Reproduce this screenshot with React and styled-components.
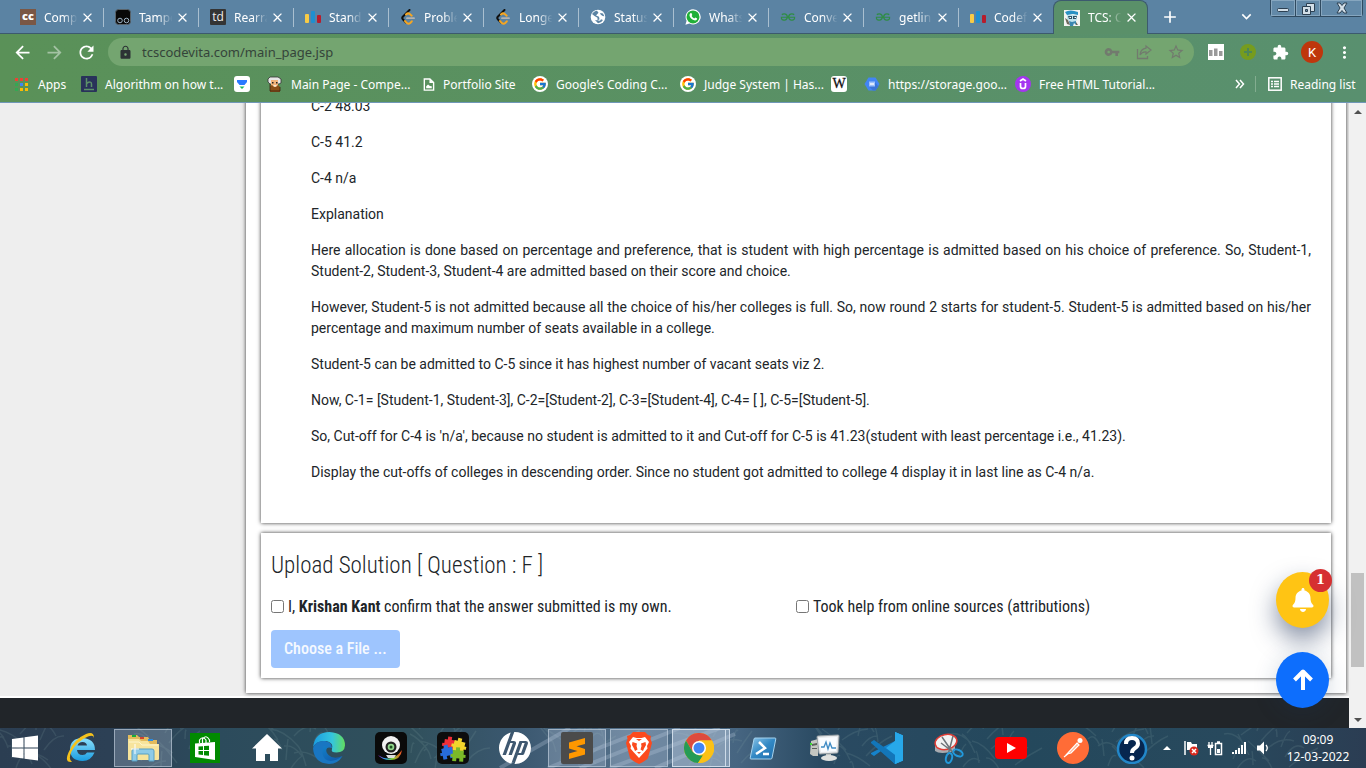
import React from 'react';
import styled, { createGlobalStyle, css } from 'styled-components';
import { MdArrowBack, MdArrowForward, MdRefresh, MdLock, MdVpnKey, MdStarBorder, MdExtension, MdMoreVert, MdClose, MdAdd, MdKeyboardArrowDown } from 'react-icons/md';
import { FaBell } from 'react-icons/fa';
import { FcGoogle } from 'react-icons/fc';
import { SiHp, SiGeeksforgeeks } from 'react-icons/si';

const uiFont = '"Noto Sans", "Open Sans", sans-serif';
const condensed = '"Roboto Condensed", "Liberation Sans Narrow", Roboto, sans-serif';

const GlobalStyle = createGlobalStyle`
  *, *::before, *::after { box-sizing: border-box; }
  body { margin: 0; overflow: hidden; }
  button, input { font: inherit; }
  button { border: 0; padding: 0; background: none; color: inherit; }
  svg { display: block; flex: none; }
`;

const Screen = styled.div`
  display: flex;
  flex-direction: column;
  height: 100vh;
  background: #fff;
  font-family: ${uiFont};
`;

/* ---------- browser: tab strip ---------- */

const TabStrip = styled.header`
  display: flex;
  flex: none;
  height: 34px;
  padding-left: 8px;
  background: #5b83a3;
  border-bottom: 1px solid #3c5a6e;
`;

const Tabs = styled.div`
  display: flex;
`;

const Tab = styled.div`
  display: flex;
  align-items: center;
  width: 95px;
  height: 34px;
  padding: 0 8px 0 12px;
  color: #fff;
  font-size: 12px;
  position: relative;
  &::after {
    content: '';
    position: absolute;
    right: -1px;
    top: 8px;
    height: 19px;
    width: 1px;
    background: ${(p) => (p.$divider ? '#a9bfd0' : 'transparent')};
  }
  ${(p) =>
    p.$active &&
    css`
      border: 1px solid #3c5a6e;
      border-bottom: 0;
      border-radius: 8px 8px 0 0;
      background: #5a9069;
      padding: 0 8px 0 10px;
    `}
`;

const TabTitle = styled.button`
  width: 38px;
  margin-left: 8px;
  white-space: nowrap;
  text-align: left;
  mask-image: linear-gradient(90deg, #000 50%, transparent 88%);
`;

const CloseButton = styled.button`
  display: flex;
  width: 15px;
  margin-left: -2px;
`;

const StripButton = styled.button`
  display: flex;
  align-items: center;
  justify-content: center;
  width: 44px;
  color: #fff;
`;

const Spacer = styled.div`
  flex: 1;
`;

const WindowControls = styled.div`
  display: flex;
  width: 93px;
  height: 17px;
  margin: 0 3px 0 2px;
  border: 1px solid #2f4a60;
  border-top: 0;
  border-radius: 0 0 4px 4px;
  background: #6289a8;
`;

const WindowButton = styled.button`
  display: flex;
  align-items: center;
  justify-content: center;
  flex: ${(p) => p.$grow || 1};
  border-left: ${(p) => (p.$first ? 0 : '1px solid #2f4a60')};
  box-shadow: inset 0 0 0 1px #86a6bf;
`;

/* ---------- browser: toolbar ---------- */

const Toolbar = styled.div`
  display: flex;
  align-items: center;
  flex: none;
  height: 34px;
  padding: 2px 6px 0;
  background: linear-gradient(90deg, #5a9158, #59906f);
  color: #fff;
`;

const ToolButton = styled.button`
  display: flex;
  align-items: center;
  justify-content: center;
  width: 32px;
  height: 28px;
  opacity: ${(p) => (p.disabled ? 0.45 : 1)};
  color: #fff;
`;

const AddressBar = styled.label`
  display: flex;
  align-items: center;
  flex: 1;
  height: 28px;
  margin: 0 6px;
  padding: 0 2px 0 10px;
  border-radius: 14px;
  background: #74a570;
  color: #2c3335;
  button { color: #727a6e; }
`;

const AddressInput = styled.input`
  flex: 1;
  min-width: 0;
  margin-left: 9px;
  padding: 0;
  border: 0;
  background: transparent;
  color: #34443a;
  font-family: ${uiFont};
  font-size: 13px;
`;

const Avatar = styled.span`
  display: flex;
  align-items: center;
  justify-content: center;
  width: 22px;
  height: 22px;
  border-radius: 50%;
  background: #bf360c;
  font: 13px Roboto, sans-serif;
`;

/* ---------- browser: bookmarks ---------- */

const BookmarkBar = styled.nav`
  display: flex;
  align-items: center;
  flex: none;
  gap: 17px;
  height: 35px;
  padding: 0 14px 2px 15px;
  background: linear-gradient(90deg, #5a9158, #59906f);
  border-bottom: 1px solid #6f97b8;
`;

const Bookmark = styled.a`
  display: flex;
  align-items: center;
  gap: 8px;
  color: #fff;
  font-size: 12px;
  text-decoration: none;
  white-space: nowrap;
`;

const BookmarkLabel = styled.span`
  width: ${(p) => p.$width}px;
`;

const BarDivider = styled.span`
  width: 1px;
  height: 16px;
  background: #83ad90;
  margin: 0 -5px 0 -7px;
`;

/* ---------- page ---------- */

const Viewport = styled.div`
  position: relative;
  display: flex;
  flex: 1;
  min-height: 0;
`;

const Page = styled.div`
  display: flex;
  flex-direction: column;
  justify-content: flex-end;
  flex: 1;
  overflow: hidden;
`;

const Body = styled.div`
  display: flex;
  flex: none;
  padding-bottom: 3px;
  border-bottom: 2px solid #fff;
  background: #eee;
`;

const Side = styled.aside`
  flex: none;
  width: 246px;
`;

const Main = styled.main`
  display: flex;
  flex-direction: column;
  gap: 10px;
  flex: 1;
  margin-right: 3px;
  padding: 15px;
  background: #fff;
  box-shadow: 0 0 4px #333;
`;

const Card = styled.section`
  background: #fff;
  box-shadow: 0 0 4px #333;
  color: #212529;
`;

const QuestionCard = styled(Card)`
  padding: 0 20px 25px 50px;
  font: 14px/21px Roboto, sans-serif;
  text-align: justify;
  p { margin: 0 0 15px; }
`;

const UploadCard = styled(Card)`
  padding: 19px 10px 10px;
  font: 16px/24px ${condensed};
`;

const UploadTitle = styled.h4`
  margin: 0 0 15px;
  font-size: 23px;
  line-height: 28px;
  font-weight: 300;
`;

const Confirmations = styled.div`
  display: grid;
  grid-template-columns: 1fr 1fr;
  margin-bottom: 11px;
`;

const CheckLabel = styled.label`
  display: flex;
  align-items: center;
  gap: 4px;
  input {
    width: 13px;
    height: 13px;
    margin: 0 0 2px;
  }
`;

const FileButton = styled.button`
  height: 38px;
  padding: 0 13px;
  border-radius: 4px;
  background: #9ec5fe;
  color: #f5f9ff;
  font-weight: 500;
`;

const PageFooter = styled.footer`
  flex: none;
  height: 30px;
  background: #212529;
`;

const Floating = styled.div`
  position: absolute;
  right: 37px;
  bottom: 20px;
  display: flex;
  flex-direction: column;
  gap: 24px;
`;

const RoundButton = styled.button`
  position: relative;
  display: flex;
  align-items: center;
  justify-content: center;
  width: 53px;
  height: 56px;
  border-radius: 50%;
  background: ${(p) => p.$color};
  color: #fff;
  box-shadow: ${(p) => p.$shadow};
`;

const Badge = styled.span`
  position: absolute;
  top: -3px;
  right: -3px;
  width: 23px;
  height: 23px;
  border-radius: 50%;
  background: #d63031;
  font: bold 13px/22px "DejaVu Serif", serif;
  text-align: center;
`;

const Scrollbar = styled.div`
  display: flex;
  flex-direction: column;
  flex: none;
  width: 17px;
  background: #f1f1f1;
`;

const ScrollArrow = styled.button`
  display: flex;
  align-items: center;
  justify-content: center;
  height: 17px;
`;

const ScrollSpace = styled.div`
  flex: ${(p) => p.$share};
`;

const ScrollThumb = styled.div`
  flex: 94;
  margin: 0 2px;
  background: #c1c1c1;
`;

/* ---------- taskbar ---------- */

const Taskbar = styled.footer`
  position: relative;
  display: flex;
  flex: none;
  height: 40px;
  overflow: hidden;
  background: linear-gradient(90deg, #2b3e52 0, #2c4055 8%, #2c4b5c 16%, #30505c 30%, #3b5870 38%, #54708a 46%, #466581 54%, #2a4a62 60%, #24485c 75%, #28495d 90%, #2b3d53);
`;

const Texture = styled.svg`
  position: absolute;
  inset: 0;
  width: 100%;
  height: 100%;
`;

const TaskButton = styled.button`
  position: relative;
  display: flex;
  align-items: center;
  justify-content: center;
  flex: none;
  width: ${(p) => p.$width || 58}px;
  height: 38px;
  margin: 1px 2px;
  ${(p) =>
    p.$open &&
    css`
      border: 1px solid rgba(210, 222, 235, ${p.$front ? 0.95 : 0.55});
      background: rgba(190, 205, 225, ${p.$front ? 0.5 : 0.28});
    `}
`;

const StackEdge = styled.span`
  flex: none;
  width: 4px;
  height: 38px;
  margin: 1px 2px 1px -2px;
  border: 1px solid rgba(210, 222, 235, 0.9);
  border-left: 0;
  background: rgba(190, 205, 225, 0.5);
  position: relative;
`;

const Tray = styled.div`
  position: relative;
  display: flex;
  align-items: center;
  margin-left: auto;
  color: #fff;
`;

const TrayButton = styled.button`
  display: flex;
  justify-content: center;
  width: 24px;
`;

const HelpButton = styled.button`
  margin-right: 7px;
`;

const Clock = styled.time`
  width: 82px;
  margin: 0 7px 0 2px;
  font-size: 12px;
  line-height: 17px;
  text-align: center;
  white-space: pre-line;
`;

/* ---------- icons ---------- */

const Icon = ({ size = 16, box, children, ...rest }) => (
  <svg width={size} height={size} viewBox={box || `0 0 ${size} ${size}`} aria-hidden="true" {...rest}>
    {children}
  </svg>
);

const BarsIcon = () => (
  <Icon>
    <rect x="0" y="5" width="4" height="9" rx="1" fill="#f8cb45" />
    <rect x="6" y="2" width="4" height="12" rx="1" fill="#1e8fd0" />
    <rect x="12" y="6" width="4" height="8" rx="1" fill="#b71c2c" />
  </Icon>
);

const LeetIcon = () => (
  <Icon>
    <path d="M9.5 1 3 7.5Q1.5 9 3 10.5l3 3" fill="none" stroke="#101010" strokeWidth="2" strokeLinecap="round" />
    <path d="m5 12 1.8 2q1.8 1.3 3.5 0l1.5-1.7M6 5.5q2-2 4-.3l1.7 1.5" fill="none" stroke="#f5a623" strokeWidth="2" strokeLinecap="round" />
    <path d="M7 9.2h7" stroke="#b3b3b3" strokeWidth="1.8" strokeLinecap="round" />
  </Icon>
);

const CodechefIcon = () => (
  <Icon>
    <rect width="16" height="16" fill="#7a5745" />
    <text x="8" y="11" textAnchor="middle" fontFamily="Open Sans, sans-serif" fontWeight="800" fontSize="11" fill="#fff">cc</text>
  </Icon>
);

const TamperIcon = () => (
  <Icon>
    <rect x=".5" y=".5" width="15" height="15" rx="3" fill="#080808" stroke="#59636a" />
    <circle cx="5" cy="11.5" r="2.3" fill="#111" stroke="#9fb4c6" />
    <circle cx="11.5" cy="11.5" r="2.3" fill="#111" stroke="#9fb4c6" />
  </Icon>
);

const TdIcon = () => (
  <Icon>
    <rect width="16" height="16" rx="1" fill="#343434" />
    <text x="8" y="12" textAnchor="middle" fontFamily="Open Sans, sans-serif" fontSize="12" fill="#eee">td</text>
  </Icon>
);

const GlobeIcon = () => (
  <Icon>
    <circle cx="8" cy="8" r="7.3" fill="#fff" />
    <path d="M2 5q3-3.5 5-3.3l1.5 2L6 6.5l3 1.2.5 2.5-2 1.2V8.8L4.5 7zM10 4l3 .5 1.3 2.7-1.5-.3-2-1.2zM5 11l5 .8 1-1.5 2 .8q-2 3.3-5 3.2z" fill="#5b83a3" />
  </Icon>
);

const WhatsIcon = () => (
  <Icon>
    <path d="M8 .3a7.6 7.6 0 1 1-3.5 14.3L.4 15.7l1.2-4A7.6 7.6 0 0 1 8 .3Z" fill="#fff" />
    <circle cx="8" cy="7.9" r="6.5" fill="#20b038" />
    <path d="M5.2 4.3 6.4 4l.9 2-.7 1q1 1.8 2.7 2.4l.9-1 2 1q-.2 2-2.1 2Q5 10.5 4.4 6z" fill="#fff" />
  </Icon>
);

const GfgIcon = () => (
  <Icon box="0 0 27 27">
    <g transform="translate(1 1)"><SiGeeksforgeeks size={25} color="#2f8d46" /></g>
  </Icon>
);

const TcsIcon = () => (
  <Icon>
    <rect width="16" height="16" fill="#f4f4f2" />
    <path d="M1 2q5-3 13 0v3L9 4 3 5z" fill="#2a91c4" />
    <path d="M3 5h10v5l-2 2H6L3 9z" fill="#bfe3ee" />
    <path d="M4 6h4v3H5zm5 0h4l-1 3H9z" fill="#315266" />
    <path d="M5.500 7h1.500v1H5.500zm5 0H12v1h-1.500z" fill="#fff" />
    <path d="m5 11 3 1 4-1v4l-2-2-1 3H6z" fill="#3a87b0" />
    <path d="m1 8 3 2 2 5-3-1zM12 12l2 3h-2z" fill="#6e6a5c" />
  </Icon>
);

const AppsIcon = () => (
  <Icon size={15}>
    {['#ea4335', '#ea4335', '#ea4335', '#34a853', '#4285f4', '#fbbc05', '#34a853', '#fbbc05', '#fbbc05'].map((fill, i) => (
      <rect key={i} x={(i % 3) * 5} y={1 + Math.floor(i / 3) * 5} width="3" height="3" fill={fill} />
    ))}
  </Icon>
);

const HIcon = () => (
  <Icon>
    <rect width="16" height="16" rx="1" fill="#29325a" />
    <path d="M5.500 2v9M5.500 7.500q5-3 5 .5v3M3 13.500h10" stroke="#5c9168" strokeWidth="1.500" fill="none" />
  </Icon>
);

const UnstopIcon = () => (
  <Icon>
    <rect width="16" height="16" rx="3" fill="#fff" />
    <path d="M3 4h10v2L10.500 9h-5L3 6z" fill="#2979ff" />
    <path d="M5.500 10.500h5L8 13z" fill="#1cb55c" />
  </Icon>
);

const ProfessorIcon = () => (
  <Icon>
    <path d="M3 1h8l3 2v4l-2 1H3L1 6V3z" fill="#e6e6e6" stroke="#333" strokeWidth=".8" />
    <path d="M4 4h7v7H4z" fill="#f3b37a" />
    <path d="M5 6h1.500v1.500H5zm4 0h1.500v1.500H9z" fill="#222" />
    <path d="M3 10l2-1 2 2h2l2-2 2 2v5H3z" fill="#8b4f18" />
    <path d="M6 9h4l-2 2z" fill="#f5e7d5" />
    <path d="M3 8v7h10v-4" fill="none" stroke="#3a2713" strokeWidth=".8" />
  </Icon>
);

const FileIcon = () => (
  <Icon size={13} box="0 0 13 14">
    <path d="M2 1h6l4 4v8H2z" fill="none" stroke="#fff" strokeWidth="1.500" />
    <path d="M7.500 1v4.500H12z" fill="#fff" />
    <path d="M4 11V9l2-2 2 1.500L10 9v2z" fill="#fff" />
  </Icon>
);

const GoogleIcon = () => (
  <Icon>
    <circle cx="8" cy="8" r="8" fill="#fff" />
    <g transform="translate(1 1)"><FcGoogle size={14} /></g>
  </Icon>
);

const WikiIcon = () => (
  <Icon>
    <rect width="16" height="16" rx="3" fill="#fff" />
    <text x="8" y="12" textAnchor="middle" fontFamily="Liberation Serif, serif" fontSize="14" fill="#111" stroke="#111" strokeWidth=".3">W</text>
  </Icon>
);

const CloudIcon = () => (
  <Icon>
    <path d="M4.500 1.500h7L15.500 8l-4 6.500h-7L.5 8z" fill="#4285f4" />
    <path d="m11 6 3.500 4.500-3 4H9L5 10.500z" fill="#3a74d8" />
    <path d="M5 5.500h6v5H5z" fill="#9fc1fa" />
    <path d="M6 7h4v2H6z" fill="#dfeafd" />
  </Icon>
);

const UdemyIcon = () => (
  <Icon>
    <circle cx="8" cy="8" r="8" fill="#a435f0" />
    <path d="M5.500 7v3.500q0 2 2.500 2t2.500-2V7M5 5l3-2 3 2" fill="none" stroke="#fff" strokeWidth="1.700" />
  </Icon>
);

const ReadingIcon = () => (
  <Icon size={14}>
    <rect x=".8" y=".8" width="12.400" height="12.400" fill="none" stroke="#fff" strokeWidth="1.500" />
    <path d="M3 4.500h2m1 0h5M3 7h2m1 0h5M3 9.500h2m1 0h5" stroke="#fff" strokeWidth="1.400" />
  </Icon>
);

const ShareIcon = () => (
  <Icon>
    <path d="M1.500 5v9.500h10V12" fill="none" stroke="currentColor" strokeWidth="1.300" />
    <path d="M10 2 15 6l-5 4V7.800Q6 7.500 4 11q.5-6 6-6.800z" fill="none" stroke="currentColor" strokeWidth="1.200" />
  </Icon>
);

const ChartExtIcon = () => (
  <Icon>
    <rect width="16" height="16" fill="#fff" />
    <path d="M1 6h3.500v6H1zM6 4.500h3.500V12H6zM11 7h3.500v5H11z" fill="#999" />
  </Icon>
);

const PlusExtIcon = () => (
  <Icon>
    <circle cx="8" cy="8" r="8" fill="#769c1e" />
    <path d="M8 4v8M4 8h8" stroke="#4d8756" strokeWidth="2" />
  </Icon>
);

const WindowsIcon = () => (
  <Icon size={26}>
    <path d="M0 4 11.500 2.500v10H0zM12.500 2.300 26 .5v12H12.500zM0 13.500h11.500v10L0 22zM12.500 13.500H26v12l-13.500-1.800z" fill="#fff" />
  </Icon>
);

const IeIcon = () => (
  <Icon size={32}>
    <defs>
      <linearGradient id="ie" x2="0" y2="1"><stop stopColor="#8ce0fb" /><stop offset="1" stopColor="#1a9ce0" /></linearGradient>
    </defs>
    <path d="M30 18H12q.5 5 5.500 5 3 0 4.500-2.500h7.500Q26 29 17.500 29 5 28.500 5 17.500T17 6q13 .5 13 12ZM12.500 13.500H22q-.5-3.500-4.500-3.500t-5 3.500Z" fill="url(#ie)" />
    <path d="M7 30Q-1 31 3.500 20.500 9 7 21 2q8-3 8 4-.5-3.500-6-1.500Q12 9 6.500 19.500 3 27.500 7 30Z" fill="#f5c21c" />
  </Icon>
);

const ExplorerIcon = () => (
  <Icon size={32}>
    <path d="M1 5V3h9l2 2h9l2 3h7v20H1z" fill="#e2bb5c" />
    <path d="M5 3h4v2H5z" fill="#18ad3c" /><path d="M13 5h4v2h-4z" fill="#d2452e" /><path d="M21 7h5v2h-5z" fill="#2e8ce0" />
    <path d="M1 7h11l2 2h7l2 3h9v15q0 1-1 1H2q-1 0-1-1z" fill="#f7e49c" />
    <path d="M2 10h10l3 3h16" stroke="#fdf5cc" fill="none" />
    <path d="M5 29V19q0-2 2-2h18q2 0 2 2v10h-5v-6q0-1-1-1H11q-1 0-1 1v6z" fill="#8ecbe8" stroke="#579fc4" />
    <path d="M8 12v10M4 17h8" stroke="#fff" />
  </Icon>
);

const StoreIcon = () => (
  <Icon size={30}>
    <rect width="30" height="30" fill="#018a00" />
    <path d="M5 10.500 25 9v18L5 24z" fill="#fff" />
    <path d="M9.500 10V7q3-4.500 6.500 0v3M12.500 10V6q3.500-5 7 1v2" fill="none" stroke="#fff" strokeWidth="1.200" />
    <path d="m8.500 13.500 4.500-.3V17H8.500zm5.500-.4 5-.4V17h-5zm-5.500 4.900H13v4l-4.500-.5zm5.500 0h5v4.800l-5-.6z" fill="#018a00" />
  </Icon>
);

const HomeIcon = () => (
  <Icon size={30}>
    <path d="M15 1 30 15.500h-4V28h-8v-7h-5v7H4V15.500H0z" fill="#fff" />
  </Icon>
);

const EdgeIcon = () => (
  <Icon size={32}>
    <defs>
      <linearGradient id="edgeTop"><stop stopColor="#1b9ce0" /><stop offset=".6" stopColor="#35c6dd" /><stop offset="1" stopColor="#62dd5f" /></linearGradient>
      <linearGradient id="edgeLow" x2="1" y2="1"><stop stopColor="#1280c8" /><stop offset="1" stopColor="#1254a5" /></linearGradient>
    </defs>
    <path d="M0 15Q2 0 16.500 0 32 1 32 13.500q-.5 7-8.500 7-6 0-4.500-3.500Q21 11 13.500 9 4 8 0 15Z" fill="url(#edgeTop)" />
    <path d="M0 16Q3 8 12 9q7 1 7 7-5-2-6.500 2.500Q11.500 26 21 27q4 0 8.500-3Q25 32 16 32 1 31 0 16Z" fill="#1976c2" />
    <path d="M11 14q-4 7 1 13 7 5 17.500-3-9 4-14-1-4-4-1-8z" fill="url(#edgeLow)" />
  </Icon>
);

const WebcamIcon = () => (
  <Icon size={32}>
    <defs><linearGradient id="rainbow"><stop stopColor="#9a22d0" /><stop offset=".3" stopColor="#2ba2ee" /><stop offset=".6" stopColor="#83dd35" /><stop offset="1" stopColor="#f14523" /></linearGradient></defs>
    <rect width="32" height="32" rx="5" fill="#0a0a0a" />
    <path d="M3 23q14 9 24-5-1 10-12 10-8 0-12-5Z" fill="url(#rainbow)" />
    <circle cx="16" cy="13" r="9" fill="#f2f2f2" /><circle cx="16" cy="15" r="5.500" fill="#222" /><circle cx="16" cy="15" r="3.300" fill="#91d68b" /><circle cx="16" cy="15" r="1.500" fill="#1c5122" />
    <path d="M11 23h10l-2 3h-6z" fill="#ddd" />
  </Icon>
);

const piece = 'M0 1h3V-2h4v3h4v4h2v3h-2v4H7V9H4v3H0V8h-2V5H0z';
const PuzzleIcon = () => (
  <Icon size={32}>
    <rect width="32" height="32" rx="5" fill="#0d0d0d" />
    <path d={piece} transform="translate(8 6) rotate(8)" fill="#ef2e38" />
    <path d={piece} transform="translate(18 7) rotate(14)" fill="#f2d42c" />
    <path d={piece} transform="translate(4 16) rotate(-12)" fill="#276cdc" />
    <path d={piece} transform="translate(16 17) rotate(4)" fill="#7bb928" />
  </Icon>
);

const HpIcon = () => (
  <Icon size={32}>
    <circle cx="16" cy="16" r="14" fill="#3f5870" />
    <SiHp size={32} color="#fff" />
  </Icon>
);

const SublimeIcon = () => (
  <Icon size={32}>
    <rect width="32" height="32" rx="2" fill="#4b4b4b" />
    <path d="M8 10.500 24 6v6l-8.500 2.300L24 17v5.500L8 27v-5.500l8.500-2.500L8 16.500z" fill="#ff9800" />
  </Icon>
);

const BraveIcon = () => (
  <Icon size={32}>
    <path d="M7 3 10 0h12l3 3 3 1-.5 3 1.500 4-4 15q-1 2-9 6-8-4-9-6L3 11l1.500-4L4 4z" fill="#fb4a1e" />
    <path d="m10 5 3.500 1h5L22 5l4 5-2 4 .5 2.500-3 3.500-5.500 6-5.500-6-3-3.500L8 14l-2-4z" fill="#fff" />
    <path d="m9.500 10 4.500 1.500-.5 2.500 1 3.500L12 19l-1-2.500L9 13zm13 0L18 11.500l.5 2.500-1 3.500L20 19l1-2.500 2-3.500zM13 7h6l-3 2zM14 20h4l-2 2z" fill="#fb4a1e" />
  </Icon>
);

const ChromeIcon = () => (
  <Icon size={30}>
    <circle cx="15" cy="15" r="15" fill="#fbc116" />
    <path d="M2 7.500A15 15 0 0 1 28 7.500H15L8.500 18.700z" fill="#dd4b3e" />
    <path d="M2 7.500 8.500 18.700 15 22.500h4L14 30A15 15 0 0 1 2 7.500Z" fill="#259b55" />
    <path d="M15 7.500h13A15 15 0 0 1 14 30l7.500-11.200z" fill="#fbc116" />
    <circle cx="15" cy="15" r="7" fill="#fff" /><circle cx="15" cy="15" r="5.500" fill="#4285f4" />
  </Icon>
);

const PowerShellIcon = () => (
  <Icon size={28}>
    <defs><linearGradient id="shell" x2="1" y2="1"><stop stopColor="#8cc6ea" /><stop offset=".5" stopColor="#3288c4" /><stop offset="1" stopColor="#1e6cab" /></linearGradient></defs>
    <path d="M6 4h20q1 0 .8 1L23 24q-.2 1-1.200 1H2q-1 0-.8-1L5 5q.2-1 1-1Z" fill="url(#shell)" stroke="#a5d2ed" />
    <path d="m10 8 6 6-9 6M14 20h6" fill="none" stroke="#fff" strokeWidth="2.500" />
  </Icon>
);

const MonitorIcon = () => (
  <Icon size={32}>
    <path d="m2 9 7-2v17H4l-3-2z" fill="#c3c6c1" /><path d="M3 12l5-1v2l-5 1zm0 4h5v1H3z" fill="#5b615d" /><rect x="1" y="11" width="2" height="2" fill="#40d934" />
    <path d="m9 4 20-1q1 0 1 1l-1 16q0 1-1 1L11 22q-1 0-1-1L8 5q0-1 1-1Z" fill="#e8eaec" stroke="#98a0a4" />
    <path d="m10 6 18-1-1 14-15 1z" fill="#f9fcff" />
    <path d="M12 15h3l2-5 2 7 2-6 2 5h4" fill="none" stroke="#3d8ac4" strokeWidth="1.300" />
    <path d="M17 22h5v2h-5z" fill="#bfc3c1" /><ellipse cx="20" cy="26" rx="8" ry="3" fill="#dfe1df" />
  </Icon>
);

const CodeIcon = () => (
  <Icon size={32}>
    <path d="m24 0 8 3.500v25L24 32 10 19l-7 5-3-2v-1l24-12z" fill="#1583cc" />
    <path d="m24 9-9 7 9 7v9l8-3.500v-25L24 0z" fill="#27a8ea" />
    <path d="m3 8 21 15v9L0 11V10z" fill="#1376b9" />
    <path d="m24 0 8 3.500v25L24 32z" fill="#27a8ea" />
  </Icon>
);

const SnipIcon = () => (
  <Icon size={32}>
    <path d="M2 11v8q5 4 20 0v-9z" fill="#a8abb0" />
    <ellipse cx="13" cy="10" rx="11" ry="7.500" transform="rotate(-12 13 10)" fill="#f2f2f2" stroke="#e03d36" strokeWidth="1.500" />
    <path d="m9 5 11 16M20 4l-5 19M8 11l12 9" stroke="#6d7378" strokeWidth="1.500" />
    <ellipse cx="16" cy="26" rx="3" ry="5" transform="rotate(15 16 26)" fill="none" stroke="#2299dc" strokeWidth="2" />
    <ellipse cx="25" cy="21" rx="5" ry="3" transform="rotate(25 25 21)" fill="none" stroke="#2299dc" strokeWidth="2" />
  </Icon>
);

const YoutubeIcon = () => (
  <Icon size={32}>
    <rect y="5" width="32" height="22" rx="4" fill="#f00" /><path d="m12 11 9 5-9 5z" fill="#fff" />
  </Icon>
);

const PostmanIcon = () => (
  <Icon size={32}>
    <circle cx="16" cy="16" r="16" fill="#ff6c37" />
    <circle cx="23" cy="8.500" r="2.500" fill="#fff" />
    <path d="m20 11 2 2-8 8-4 1zM7 25l5-4" fill="#ffb596" stroke="#fff" strokeWidth="1.200" />
  </Icon>
);

const HelpIcon = () => (
  <Icon size={32}>
    <circle cx="16" cy="17" r="14" fill="#07264f" stroke="#2287c9" strokeWidth="2.500" />
    <path d="M10 12q0-6 6-6t6 5.500q0 3-3.500 5Q16 18 16 21" fill="none" stroke="#fff" strokeWidth="4" /><circle cx="16" cy="26" r="2.500" fill="#fff" />
  </Icon>
);

const UpIcon = () => <Icon size={8}><path d="M0 6 4 2l4 4z" fill="#fff" /></Icon>;
const FlagIcon = () => (
  <Icon>
    <path d="M2 1v14" stroke="#fff" strokeWidth="1.500" /><path d="M4 2h4l1 2h5v6H4z" fill="#fff" />
    <circle cx="11" cy="11" r="4.500" fill="#d9291e" /><path d="m9 9 4 4m0-4-4 4" stroke="#fff" strokeWidth="1.500" />
  </Icon>
);
const BatteryIcon = () => (
  <Icon>
    <path d="M8.500 3.500h6v11h-6zM10 2h3" fill="none" stroke="#fff" strokeWidth="1.500" /><path d="M10 9h3v4h-3z" fill="#fff" />
    <path d="M2 2v3m3-3v3M.5 5.500h6M3.500 6v9" fill="none" stroke="#fff" strokeWidth="1.300" /><path d="M1 5h5v3H1z" fill="#fff" />
  </Icon>
);
const SignalIcon = () => (
  <Icon><path d="M1 12h2v2H1zM4 10h2v4H4zM7 8h2v6H7zM10 5h2v9h-2zM13 2h2v12h-2z" fill="#fff" /></Icon>
);
const SpeakerIcon = () => (
  <Icon><path d="M2 5.500h3l4-4v13l-4-4H2z" fill="#fff" /><path d="M11 5q2.500 3 0 6" fill="none" stroke="#fff" strokeWidth="1.300" /></Icon>
);

/* ---------- data ---------- */

const tabs = [
  ['Comp', CodechefIcon],
  ['Tampe', TamperIcon],
  ['Rearra', TdIcon],
  ['Stand', BarsIcon],
  ['Proble', LeetIcon],
  ['Longe', LeetIcon],
  ['Status', GlobeIcon],
  ['Whats', WhatsIcon],
  ['Conve', GfgIcon],
  ['getlin', GfgIcon],
  ['Codef', BarsIcon],
  ['TCS: C', TcsIcon],
];

const bookmarks = [
  ['Apps', 26, AppsIcon],
  ['Algorithm on how t...', 112, HIcon],
  ['', 0, UnstopIcon],
  ['Main Page - Compe...', 114, ProfessorIcon],
  ['Portfolio Site', 72, FileIcon],
  ['Google’s Coding C...', 107, GoogleIcon],
  ['Judge System | Has...', 110, GoogleIcon],
  ['', 0, WikiIcon],
  ['https://storage.goo...', 110, CloudIcon],
  ['Free HTML Tutorial...', 108, UdemyIcon],
];

const paragraphs = [
  'C-2 48.03',
  'C-5 41.2',
  'C-4 n/a',
  'Explanation',
  'Here allocation is done based on percentage and preference, that is student with high percentage is admitted based on his choice of preference. So, Student-1, Student-2, Student-3, Student-4 are admitted based on their score and choice.',
  'However, Student-5 is not admitted because all the choice of his/her colleges is full. So, now round 2 starts for student-5. Student-5 is admitted based on his/her percentage and maximum number of seats available in a college.',
  'Student-5 can be admitted to C-5 since it has highest number of vacant seats viz 2.',
  'Now, C-1= [Student-1, Student-3], C-2=[Student-2], C-3=[Student-4], C-4= [ ], C-5=[Student-5].',
  "So, Cut-off for C-4 is 'n/a', because no student is admitted to it and Cut-off for C-5 is 41.23(student with least percentage i.e., 41.23).",
  'Display the cut-offs of colleges in descending order. Since no student got admitted to college 4 display it in last line as C-4 n/a.',
];

const apps = [
  ['Internet Explorer', IeIcon],
  ['File Explorer', ExplorerIcon, true],
  ['Store', StoreIcon],
  ['Home', HomeIcon],
  ['Edge', EdgeIcon],
  ['Camera', WebcamIcon],
  ['Puzzle', PuzzleIcon],
  ['HP', HpIcon],
  ['Sublime Text', SublimeIcon, true],
  ['Brave', BraveIcon, true],
  ['Chrome', ChromeIcon, true, true],
  ['PowerShell', PowerShellIcon],
  ['System monitor', MonitorIcon],
  ['Code', CodeIcon],
  ['Snipping Tool', SnipIcon],
  ['YouTube', YoutubeIcon],
  ['Postman', PostmanIcon],
];

const blades = Array.from({ length: 150 }, (_, i) => {
  const x = (i * 137) % 1366;
  const y = (i * 23) % 44;
  const lean = ((i * 31) % 60) - 30;
  return `M${x} ${y}q${lean / 2} ${-10 - (i % 7)} ${lean} ${-6 - (i % 17)}`;
}).join('');

export default function App() {
  return (
    <Screen>
      <GlobalStyle />
      <TabStrip>
        <Tabs>
          {tabs.map(([title, TabIcon], i) => (
            <Tab key={title} $active={i === 11} $divider={i < 10}>
              <TabIcon />
              <TabTitle>{title}</TabTitle>
              <CloseButton aria-label={`Close ${title}`}><MdClose size={15} /></CloseButton>
            </Tab>
          ))}
        </Tabs>
        <StripButton aria-label="New tab"><MdAdd size={20} /></StripButton>
        <Spacer />
        <StripButton aria-label="Search tabs"><MdKeyboardArrowDown size={19} /></StripButton>
        <WindowControls>
          <WindowButton $first $grow={25} aria-label="Minimize">
            <Icon size={12}><rect x=".5" y="6.500" width="11" height="3" rx="1" fill="#d3dfe8" stroke="#2c4052" /></Icon>
          </WindowButton>
          <WindowButton $grow={25} aria-label="Restore">
            <Icon size={13}>
              <path d="M4.500 1.500h8v8h-8z" fill="#d3dfe8" stroke="#2c4052" /><path d="M.5 4.500h8v8h-8z" fill="#d3dfe8" stroke="#2c4052" /><path d="M3.500 7.500h2v2h-2z" fill="#7195b1" stroke="#2c4052" />
            </Icon>
          </WindowButton>
          <WindowButton $grow={42} aria-label="Close window">
            <Icon size={12}><path d="M1 1h3l2 2.500L8 1h3L8 6l3 5H8L6 8.500 4 11H1l3-5z" fill="#d3dfe8" stroke="#2c4052" /></Icon>
          </WindowButton>
        </WindowControls>
      </TabStrip>

      <Toolbar>
        <ToolButton aria-label="Back"><MdArrowBack size={21} /></ToolButton>
        <ToolButton aria-label="Forward" disabled><MdArrowForward size={21} /></ToolButton>
        <ToolButton aria-label="Reload"><MdRefresh size={21} /></ToolButton>
        <AddressBar>
          <MdLock size={15} />
          <AddressInput aria-label="Address" defaultValue="tcscodevita.com/main_page.jsp" />
          <ToolButton aria-label="Passwords"><MdVpnKey size={16} /></ToolButton>
          <ToolButton aria-label="Share"><ShareIcon /></ToolButton>
          <ToolButton aria-label="Bookmark"><MdStarBorder size={18} /></ToolButton>
        </AddressBar>
        <ToolButton aria-label="Chart extension"><ChartExtIcon /></ToolButton>
        <ToolButton aria-label="Plus extension"><PlusExtIcon /></ToolButton>
        <ToolButton aria-label="Extensions"><MdExtension size={17} /></ToolButton>
        <ToolButton aria-label="Profile"><Avatar>K</Avatar></ToolButton>
        <ToolButton aria-label="Menu"><MdMoreVert size={19} /></ToolButton>
      </Toolbar>

      <BookmarkBar>
        {bookmarks.map(([label, width, MarkIcon], i) => (
          <Bookmark href="#" key={i} aria-label={label || 'Bookmark'}>
            <MarkIcon />
            {label && <BookmarkLabel $width={width}>{label}</BookmarkLabel>}
          </Bookmark>
        ))}
        <Spacer />
        <Icon size={10}><path d="m1 1 3.500 4L1 9m4-8 3.500 4L5 9" fill="none" stroke="#fff" strokeWidth="1.500" /></Icon>
        <BarDivider />
        <Bookmark href="#"><ReadingIcon /><BookmarkLabel $width={62}>Reading list</BookmarkLabel></Bookmark>
      </BookmarkBar>

      <Viewport>
        <Page>
          <Body>
            <Side />
            <Main>
              <QuestionCard>
                {paragraphs.map((text) => <p key={text}>{text}</p>)}
              </QuestionCard>
              <UploadCard>
                <UploadTitle>Upload Solution [ Question : F ]</UploadTitle>
                <Confirmations>
                  <CheckLabel>
                    <input type="checkbox" />
                    <span>I, <b>Krishan Kant</b> confirm that the answer submitted is my own.</span>
                  </CheckLabel>
                  <CheckLabel>
                    <input type="checkbox" />
                    <span>Took help from online sources (attributions)</span>
                  </CheckLabel>
                </Confirmations>
                <FileButton>Choose a File ...</FileButton>
              </UploadCard>
            </Main>
          </Body>
          <PageFooter />
        </Page>
        <Scrollbar>
          <ScrollArrow aria-label="Scroll up"><Icon size={8}><path d="M0 6 4 2l4 4z" fill="#505050" /></Icon></ScrollArrow>
          <ScrollSpace $share={453} />
          <ScrollThumb />
          <ScrollSpace $share={44} />
          <ScrollArrow aria-label="Scroll down"><Icon size={8}><path d="m0 2 4 4 4-4z" fill="#505050" /></Icon></ScrollArrow>
        </Scrollbar>
        <Floating>
          <RoundButton $color="#ffc414" $shadow="0 12px 24px rgba(20, 40, 80, 0.5)" aria-label="Notifications">
            <FaBell size={24} />
            <Badge>1</Badge>
          </RoundButton>
          <RoundButton $color="#0d6efd" $shadow="0 4px 24px rgba(30, 60, 100, 0.2)" aria-label="Back to top">
            <Icon size={24}>
              <path d="M12 22V4M3.500 12 12 3.500l8.500 8.500" fill="none" stroke="#fff" strokeWidth="4" strokeLinejoin="round" />
            </Icon>
          </RoundButton>
        </Floating>
      </Viewport>

      <Taskbar>
        <Texture viewBox="0 0 1366 40" preserveAspectRatio="none" aria-hidden="true">
          <path d={blades} fill="none" stroke="#86a8a8" strokeOpacity=".16" strokeWidth="1.500" />
          <path d="M500 40 570 0M548 40 640 4M580 40 680 0M610 40 720 0M655 40 735 6" stroke="#b6c8dc" strokeOpacity=".3" strokeWidth="4" />
        </Texture>
        <TaskButton $width={46} aria-label="Start"><WindowsIcon /></TaskButton>
        {apps.map(([name, AppIcon, open, front]) => (
          <React.Fragment key={name}>
            <TaskButton aria-label={name} $open={open} $front={front} $width={front ? 54 : 58}>
              <AppIcon />
            </TaskButton>
            {front && <StackEdge />}
          </React.Fragment>
        ))}
        <Tray>
          <HelpButton aria-label="Help"><HelpIcon /></HelpButton>
          <TrayButton aria-label="Show hidden icons"><UpIcon /></TrayButton>
          <TrayButton aria-label="Action center"><FlagIcon /></TrayButton>
          <TrayButton aria-label="Battery"><BatteryIcon /></TrayButton>
          <TrayButton aria-label="Network"><SignalIcon /></TrayButton>
          <TrayButton aria-label="Volume"><SpeakerIcon /></TrayButton>
          <Clock>{'09:09\n12-03-2022'}</Clock>
        </Tray>
      </Taskbar>
    </Screen>
  );
}
